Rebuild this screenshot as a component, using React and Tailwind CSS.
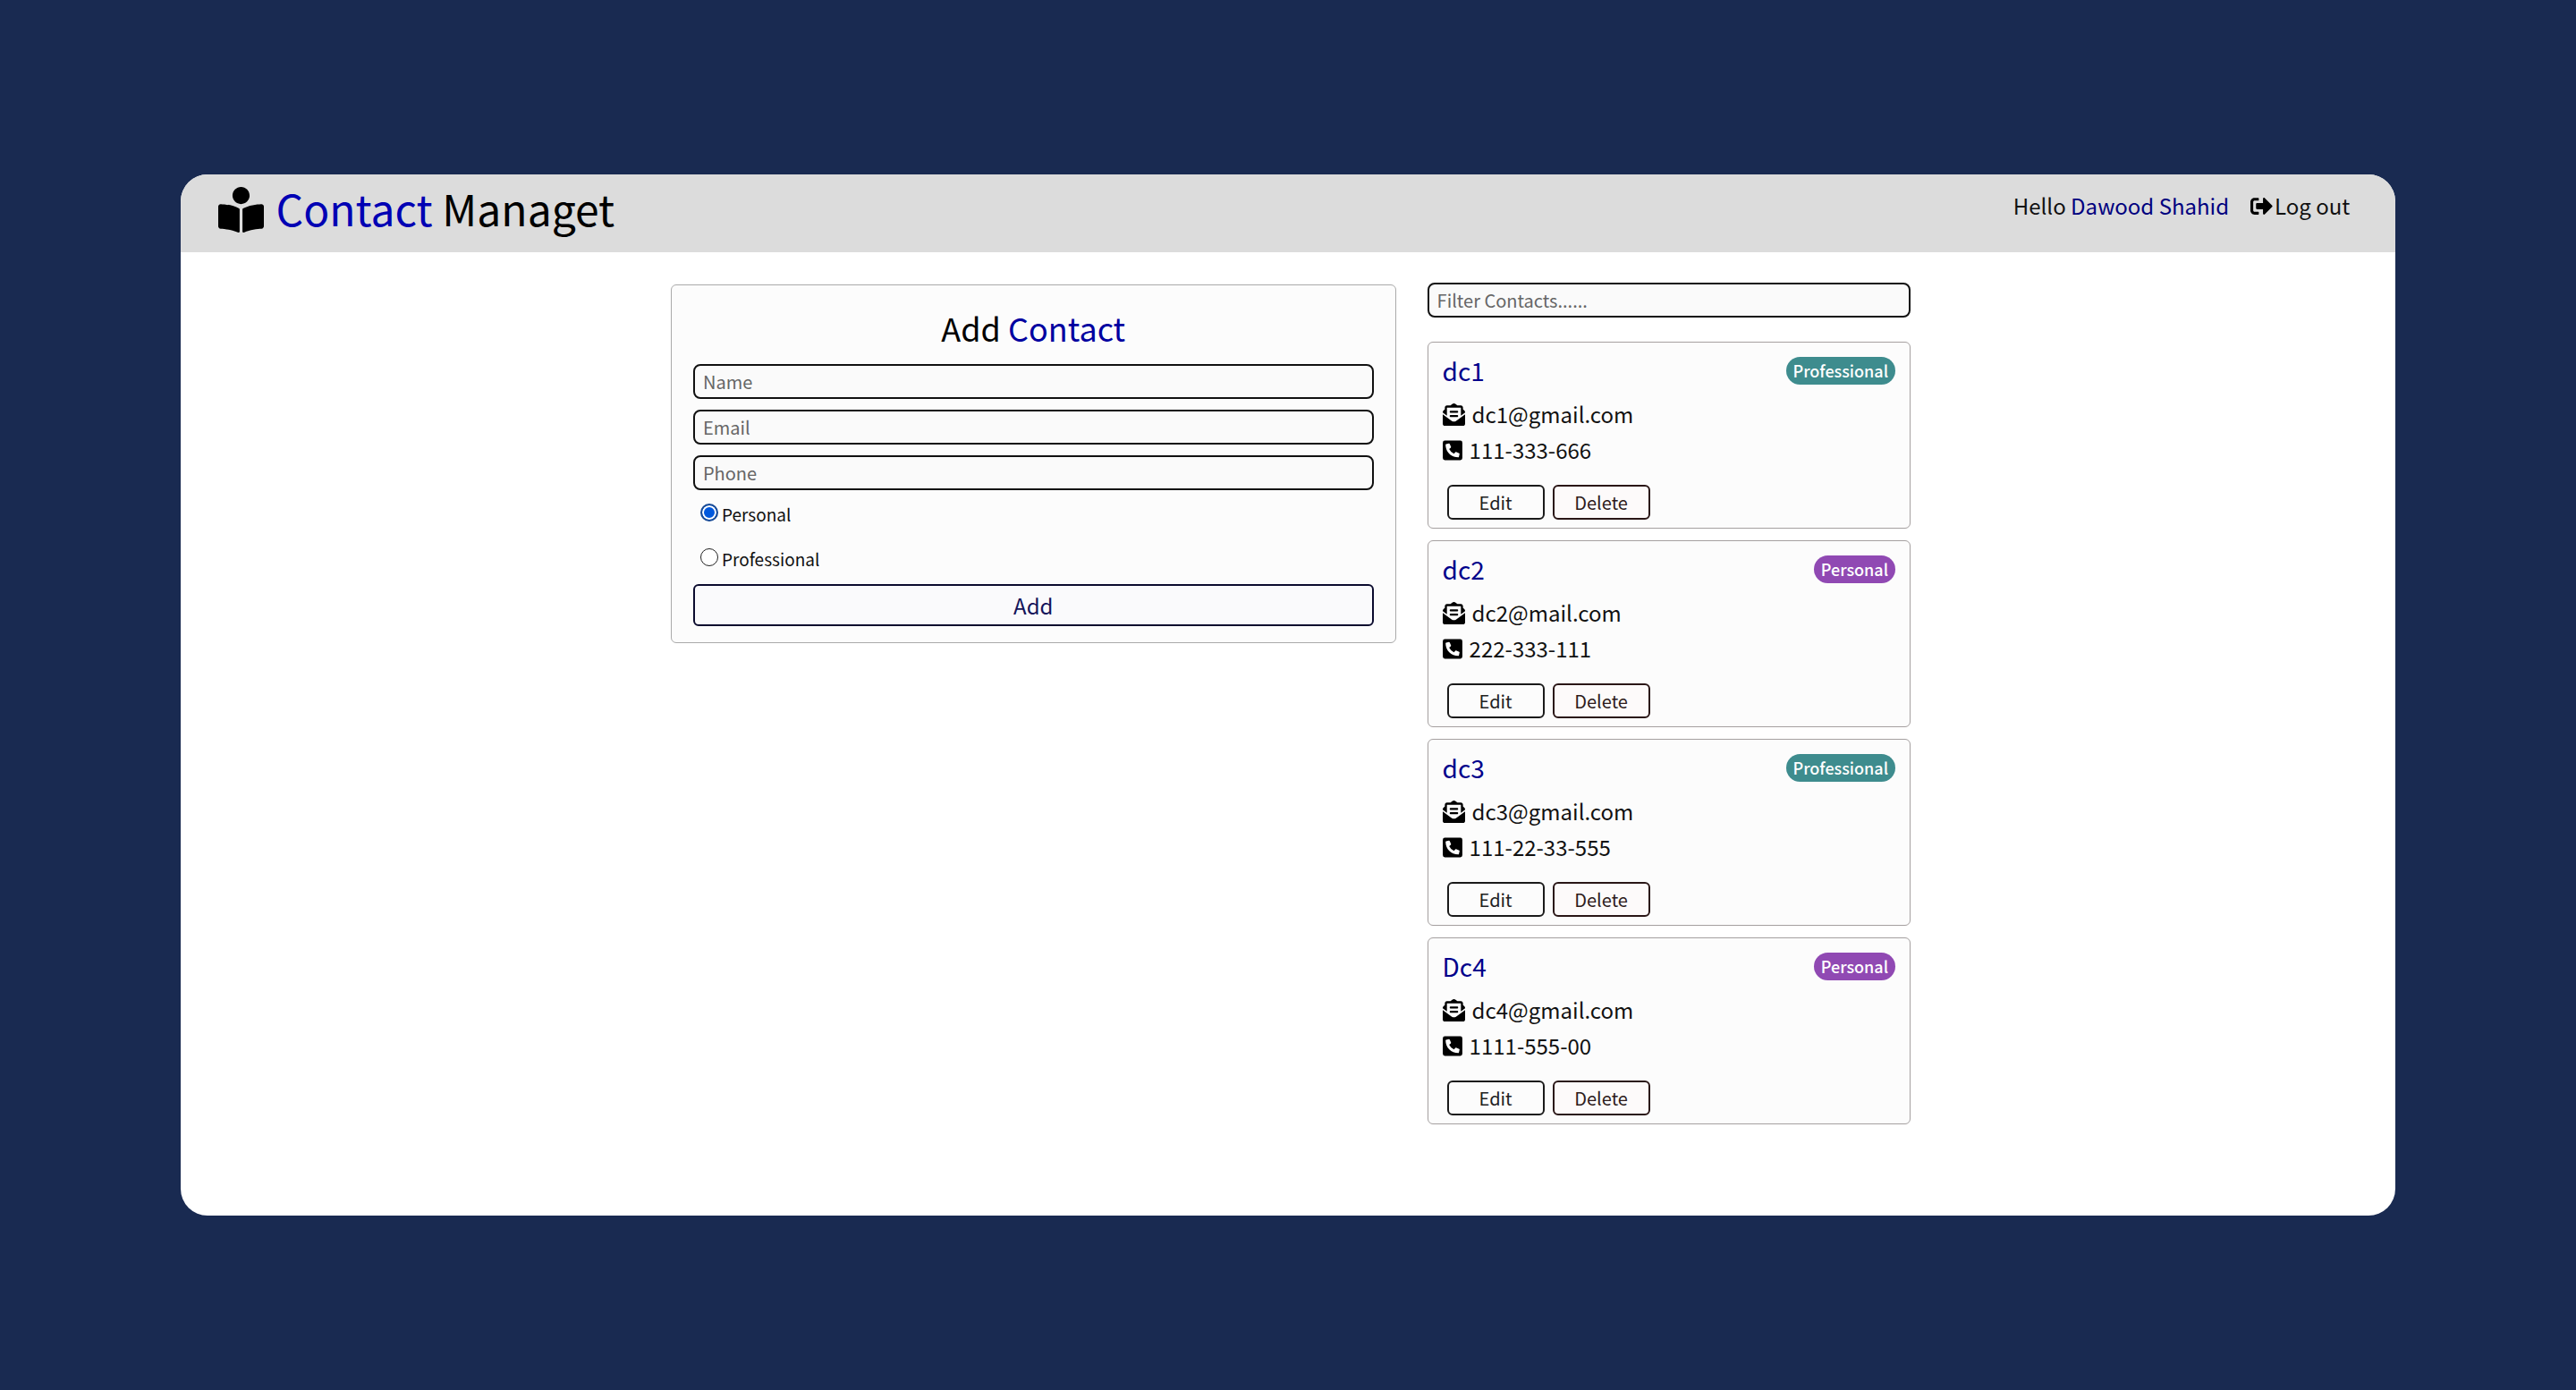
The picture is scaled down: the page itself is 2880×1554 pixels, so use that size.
import { FaBookReader, FaSignOutAlt, FaEnvelopeOpenText, FaPhoneSquareAlt } from 'react-icons/fa';

const contacts = [
  { id: 1, name: 'dc1', email: 'dc1@gmail.com', phone: '111-333-666', type: 'Professional' },
  { id: 2, name: 'dc2', email: 'dc2@mail.com', phone: '222-333-111', type: 'Personal' },
  { id: 3, name: 'dc3', email: 'dc3@gmail.com', phone: '111-22-33-555', type: 'Professional' },
  { id: 4, name: 'Dc4', email: 'dc4@gmail.com', phone: '1111-555-00', type: 'Personal' },
];

const inputClass =
  'block w-full h-[39px] px-[9px] border-2 border-[#111] rounded-lg bg-[#fafafa] text-xl leading-7 text-black placeholder:text-[#666] outline-none';

const radioClass =
  'appearance-none mb-1 size-5 rounded-full border border-[#222] bg-white checked:border-2 checked:border-[#174a96] checked:bg-[#0058dd] checked:shadow-[inset_0_0_0_2px_white]';

function Navbar() {
  return (
    <header className="flex items-start justify-between bg-[#dcdcdc] pl-[42px] pr-[51px] pb-[13px]">
      <h1 className="flex items-center gap-3.5 text-5xl leading-[74px] text-black">
        <FaBookReader className="mt-1 size-[51px]" />
        <span>
          <span className="text-[#0000b4]">Contact</span> Managet
        </span>
      </h1>
      <nav className="flex items-center gap-6 text-2xl leading-[70px] text-[#111]">
        <span>
          Hello <span className="text-[#00007f]">Dawood Shahid</span>
        </span>
        <a href="#logout" className="flex items-center gap-0.5">
          <FaSignOutAlt className="size-[25px] text-black" />
          Log out
        </a>
      </nav>
    </header>
  );
}

function ContactForm() {
  return (
    <form className="mt-0.5 border border-[#aaa] rounded-md bg-[#fcfcfc] px-6 pt-4 pb-[18px]">
      <h2 className="mb-2.5 text-center text-4xl leading-[62px] text-black">
        Add <span className="text-[#0000a0]">Contact</span>
      </h2>
      <div className="flex flex-col gap-3">
        <input type="text" name="name" placeholder="Name" aria-label="Name" className={inputClass} />
        <input type="email" name="email" placeholder="Email" aria-label="Email" className={inputClass} />
        <input type="text" name="phone" placeholder="Phone" aria-label="Phone" className={inputClass} />
      </div>
      <div className="pl-2 pt-0.5 text-[19px] text-[#111]">
        <label className="flex h-[50px] items-center gap-1">
          <input type="radio" name="type" value="personal" defaultChecked className={radioClass} />
          Personal
        </label>
        <label className="flex h-[50px] items-center gap-1">
          <input type="radio" name="type" value="professional" className={radioClass} />
          Professional
        </label>
      </div>
      <button
        type="button"
        className="mt-[3px] block h-[47px] w-full rounded-md border-2 border-[#0b0b2e] bg-[#fafafc] text-2xl text-[#14145a]"
      >
        Add
      </button>
    </form>
  );
}

function ContactItem({ contact }) {
  return (
    <div className="border border-[#a5a0a0] rounded-md bg-[#fcfcfc] px-4 pt-2 pb-[9px]">
      <div className="mb-[5px] flex items-center justify-between">
        <h3 className="text-[28px] leading-[47px] text-[#00008b]">{contact.name}</h3>
        <span
          className={`h-[31px] rounded-full px-2 text-lg leading-[31px] font-medium text-white ${
            contact.type === 'Professional' ? 'bg-[#3e8c8e]' : 'bg-[#9049b3]'
          }`}
        >
          {contact.type}
        </span>
      </div>
      <ul className="text-2xl leading-10 text-[#111]">
        <li className="flex items-center gap-2">
          <FaEnvelopeOpenText className="size-[25px] text-black" />
          {contact.email}
        </li>
        <li className="flex items-center gap-2">
          <FaPhoneSquareAlt className="h-[25px] w-[22px] text-black" />
          {contact.phone}
        </li>
      </ul>
      <div className="mt-[19px] flex gap-[9px] pl-[5px]">
        <button type="button" className="h-[39px] w-[109px] rounded-md border-2 border-[#1a1a1a] text-xl text-[#222]">
          Edit
        </button>
        <button
          type="button"
          className="h-[39px] w-[109px] rounded-md border-2 border-[#2a1616] bg-[#fdfafa] text-xl text-[#2e1c1c]"
        >
          Delete
        </button>
      </div>
    </div>
  );
}

export default function App() {
  return (
    <div className="flex min-h-screen bg-[#192a51] px-[7%] py-[195px] font-['Noto_Sans_CJK_JP','Noto_Sans',sans-serif]">
      <div className="flex-1 overflow-hidden rounded-[30px] bg-white">
        <Navbar />
        <main className="pl-1.5 pt-[34px]">
          <div className="mx-auto grid w-[56.1%] grid-cols-[3fr_2fr] items-start gap-[35px]">
            <ContactForm />
            <div>
              <input
                type="text"
                placeholder="Filter Contacts......"
                aria-label="Filter Contacts"
                className={inputClass}
              />
              <div className="mt-[27px] flex flex-col gap-[13px]">
                {contacts.map((contact) => (
                  <ContactItem key={contact.id} contact={contact} />
                ))}
              </div>
            </div>
          </div>
        </main>
      </div>
    </div>
  );
}
